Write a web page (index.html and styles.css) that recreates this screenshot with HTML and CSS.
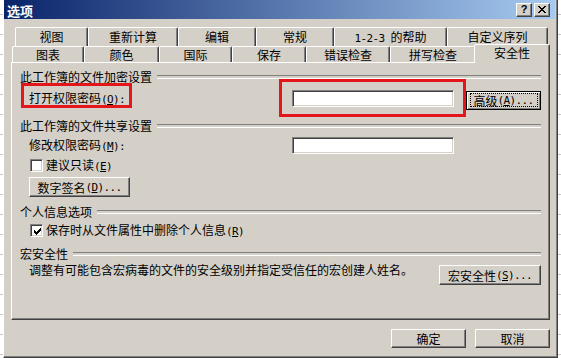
FILE: index.html
```html
<!DOCTYPE html>
<html lang="zh-CN">
<head>
<meta charset="utf-8">
<title>选项</title>
<link rel="stylesheet" href="styles.css">
</head>
<body>
<div class="dialog">
  <div class="titlebar">
    <span class="title">选项</span>
    <div class="caps">
      <span class="cap help">?</span>
      <span class="cap close">
        <svg width="8" height="7" viewBox="0 0 8 7" shape-rendering="crispEdges" fill="#000">
          <rect x="0" y="0" width="2" height="1"/><rect x="6" y="0" width="2" height="1"/>
          <rect x="1" y="1" width="2" height="1"/><rect x="5" y="1" width="2" height="1"/>
          <rect x="2" y="2" width="4" height="1"/>
          <rect x="3" y="3" width="2" height="1"/>
          <rect x="2" y="4" width="4" height="1"/>
          <rect x="1" y="5" width="2" height="1"/><rect x="5" y="5" width="2" height="1"/>
          <rect x="0" y="6" width="2" height="1"/><rect x="6" y="6" width="2" height="1"/>
        </svg>
      </span>
    </div>
  </div>
  <div class="client">
    <div class="tabrow back">
      <div class="tab w73">视图</div>
      <div class="tab w90">重新计算</div>
      <div class="tab w78">编辑</div>
      <div class="tab w78">常规</div>
      <div class="tab w113"><span class="h">1-2-3 </span>的帮助</div>
      <div class="tab w101">自定义序列</div>
    </div>
    <div class="tabrow front">
      <div class="tab w72">图表</div>
      <div class="tab w75">颜色</div>
      <div class="tab w73">国际</div>
      <div class="tab w74">保存</div>
      <div class="tab w84">错误检查</div>
      <div class="tab w86">拼写检查</div>
      <div class="tab sel">安全性</div>
    </div>
    <div class="panel">
      <div class="group">此工作簿的文件加密设置</div>
      <div class="row row-open">
        <div class="lbl">打开权限密码<span class="h">(<u>O</u>):</span></div>
        <div class="input"></div>
        <div></div>
        <div class="btn default">高级<span class="h">(<u>A</u>)...</span></div>
      </div>
      <div class="group g2">此工作簿的文件共享设置</div>
      <div class="row row-modify">
        <div class="lbl">修改权限密码<span class="h">(<u>M</u>):</span></div>
        <div class="input"></div>
      </div>
      <div class="check c1">
        <span class="box"></span>
        <span>建议只读<span class="h">(<u>E</u>)</span></span>
      </div>
      <div class="btn sig">数字签名<span class="h">(<u>D</u>)...</span></div>
      <div class="group g3">个人信息选项</div>
      <div class="check c2">
        <span class="box">
          <svg width="7" height="7" viewBox="0 0 7 7" shape-rendering="crispEdges" fill="#000">
            <rect x="6" y="0" width="1" height="1"/>
            <rect x="5" y="1" width="2" height="1"/>
            <rect x="0" y="2" width="1" height="1"/><rect x="4" y="2" width="3" height="1"/>
            <rect x="0" y="3" width="2" height="1"/><rect x="3" y="3" width="3" height="1"/>
            <rect x="0" y="4" width="5" height="1"/>
            <rect x="1" y="5" width="3" height="1"/>
            <rect x="2" y="6" width="1" height="1"/>
          </svg>
        </span>
        <span>保存时从文件属性中删除个人信息<span class="h">(<u>R</u>)</span></span>
      </div>
      <div class="group g4">宏安全性</div>
      <div class="mrow">
        <div class="lbl">调整有可能包含宏病毒的文件的安全级别并指定受信任的宏创建人姓名。</div>
        <div class="btn macro">宏安全性<span class="h">(<u>S</u>)...</span></div>
      </div>
      <div class="mark mark-label"></div>
      <div class="mark mark-input"></div>
    </div>
    <div class="footer">
      <div class="btn ok">确定</div>
      <div class="btn ok">取消</div>
    </div>
  </div>
</div>
</body>
</html>
```
FILE: styles.css
```css
* { box-sizing: border-box; margin: 0; padding: 0; }
html, body { width: 561px; height: 358px; overflow: hidden; }
body {
  background-color: #fff;
  background-image: repeating-linear-gradient(to bottom, transparent 0 14px, #c8c8c8 14px 15px, transparent 15px 20px);
  font-family: "Noto Sans CJK SC", "Noto Sans", sans-serif;
  font-size: 12px;
  line-height: 13px;
  color: #000;
}
.h {
  font-family: "DejaVu Sans Mono", monospace;
  font-size: 11px;
  letter-spacing: -0.62px;
}
u { text-decoration: underline; text-underline-offset: 1px; }

.dialog {
  margin-left: 3px;
  width: 555px;
  height: 358px;
  background: #d4d0c8;
  border-left: 1px solid #fff;
  border-right: 1px solid #404040;
  border-bottom: 1px solid #404040;
  box-shadow: inset -1px -1px 0 #808080;
  display: flex;
  flex-direction: column;
}

.titlebar {
  height: 19px;
  margin-right: 2px;
  background: linear-gradient(to right, #0a246a, #a6caf0);
  display: flex;
  align-items: flex-start;
  padding: 0 5px 0 3px;
  color: #fff;
}
.title { flex: 1; font-weight: bold; font-size: 13px; line-height: 14px; margin-top: 4px; }
.caps { display: flex; gap: 2px; margin-top: 3px; }
.cap {
  width: 16px; height: 14px;
  background: #d4d0c8;
  border: 1px solid;
  border-color: #fff #404040 #404040 #fff;
  box-shadow: inset -1px -1px 0 #808080;
  display: flex; align-items: center; justify-content: center;
  color: #000;
}
.help { font: bold 11px/1 "Liberation Sans", sans-serif; padding-bottom: 1px; }
.close svg { display: block; margin-bottom: 1px; }

.client {
  flex: 1;
  padding: 8px 7px 0 7px;
  display: flex;
  flex-direction: column;
}
.tabrow { display: flex; align-items: flex-start; }
.back { margin-left: 4px; height: 19px; }
.front { margin-left: 1px; height: 16px; }
.tab {
  flex: none;
  background: #d4d0c8;
  border-top: 1px solid #fff;
  border-left: 1px solid #fff;
  border-right: 1px solid #404040;
  box-shadow: inset -1px 0 0 #808080;
  border-radius: 2px 2px 0 0;
  text-align: center;
}
.back .tab { height: 19px; line-height: 14px; padding-top: 2px; }
.front .tab { height: 16px; line-height: 15px; }
.front .tab.sel {
  position: relative;
  z-index: 2;
  width: 76px;
  height: 19px;
  margin-left: -2px;
  margin-top: -2px;
  line-height: 13px;
  padding-top: 1px;
  padding-bottom: 4px;
}
.w72 { width: 72px; } .w73 { width: 73px; } .w74 { width: 74px; } .w75 { width: 75px; }
.w78 { width: 78px; } .w84 { width: 84px; } .w86 { width: 86px; } .w90 { width: 90px; }
.w101 { width: 101px; } .w113 { width: 113px; }

.panel {
  position: relative;
  height: 258px;
  border: 1px solid;
  border-color: #fff #404040 #404040 #fff;
  box-shadow: inset -1px -1px 0 #808080;
  padding: 7px 8px 0 8px;
}
.group { display: flex; align-items: center; height: 13px; white-space: nowrap; }
.group::after {
  content: "";
  flex: 1;
  height: 2px;
  border-top: 1px solid #808080;
  border-bottom: 1px solid #fff;
  margin-left: 5px;
}
.g2 { margin-top: 9px; }
.g3 { margin-top: 8px; }
.g4 { margin-top: 10px; }

.row { display: grid; grid-template-columns: 272px 162px 12px 75px; align-items: start; }
.row-open { margin-top: 7px; height: 20px; }
.row-modify { margin-top: 5px; height: 17px; }
.lbl { padding-left: 9px; line-height: 13px; white-space: nowrap; }
.row .lbl { margin-top: 1px; }

.input {
  height: 17px;
  background: #fff;
  border: 1px solid;
  border-color: #808080 #fff #fff #808080;
  box-shadow: inset 1px 1px 0 #404040, inset -1px -1px 0 #d4d0c8;
}

.btn {
  background: #d4d0c8;
  border: 1px solid;
  border-color: #fff #404040 #404040 #fff;
  box-shadow: inset -1px -1px 0 #808080;
  display: flex; align-items: center; justify-content: center;
  line-height: 13px;
  white-space: nowrap;
}
.btn.default {
  position: relative;
  margin-top: 1px;
  height: 19px;
  border-color: #000;
  box-shadow: inset 1px 1px 0 #fff, inset -1px -1px 0 #808080;
}
.btn.default::after {
  content: "";
  position: absolute;
  left: 3px; right: 2px; top: 1px; bottom: 2px;
  border: 1px dotted #000;
}
.sig { width: 101px; height: 20px; margin: 5px 0 0 9px; }
.macro { width: 102px; height: 20px; margin-top: 2px; }
.mrow { display: flex; justify-content: space-between; align-items: flex-start; margin-top: 3px; }

.check { display: flex; align-items: center; gap: 3px; height: 13px; margin-left: 10px; white-space: nowrap; }
.c1 { margin-top: 5px; }
.c2 { margin-top: 6px; }
.box {
  flex: none;
  width: 13px; height: 13px;
  background: #fff;
  border: 1px solid;
  border-color: #808080 #fff #fff #808080;
  box-shadow: inset 1px 1px 0 #404040, inset -1px -1px 0 #d4d0c8;
  display: flex; align-items: center; justify-content: center;
}
.box svg { display: block; margin: 1px 0 0 1px; }

.mark { position: absolute; border: 3px solid #e3171b; }
.mark-label { left: 9px; top: 20px; width: 111px; height: 25px; }
.mark-input { left: 267px; top: 16px; width: 187px; height: 38px; }

.footer { display: flex; justify-content: flex-end; gap: 9px; margin-top: 9px; }
.ok { width: 75px; height: 19px; }
```
